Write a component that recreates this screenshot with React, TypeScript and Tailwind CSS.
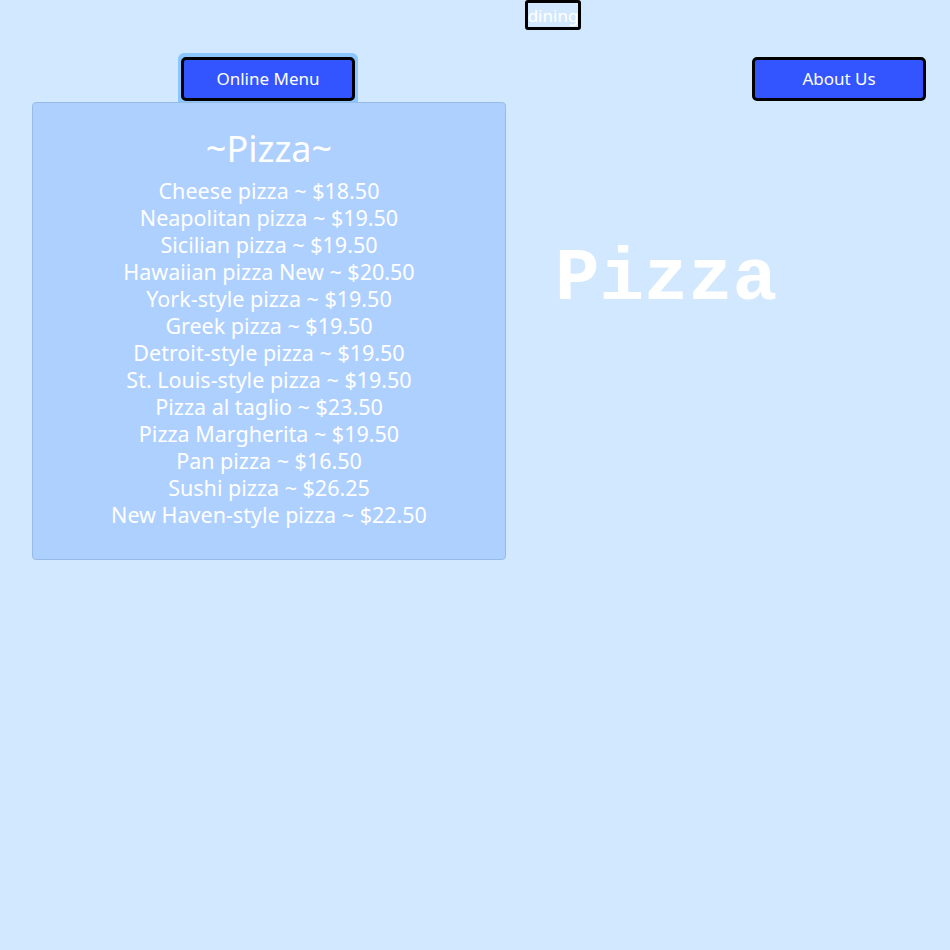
import React from 'react';

const pizzas = [
  'Cheese pizza ~ $18.50',
  'Neapolitan pizza ~ $19.50',
  'Sicilian pizza ~ $19.50',
  'Hawaiian pizza New ~ $20.50',
  'York-style pizza ~ $19.50',
  'Greek pizza ~ $19.50',
  'Detroit-style pizza ~ $19.50',
  'St. Louis-style pizza ~ $19.50',
  'Pizza al taglio ~ $23.50',
  'Pizza Margherita ~ $19.50',
  'Pan pizza ~ $16.50',
  'Sushi pizza ~ $26.25',
  'New Haven-style pizza ~ $22.50',
];

const NavButton = ({ label }: { label: string }) => (
  <button className="w-[174px] h-[44px] bg-[#3355ff] border-[3px] border-black rounded-[5px] text-white text-[17px]">
    {label}
  </button>
);

export default function App() {
  return (
    <div className="min-h-screen bg-[#d2e8ff] font-['Noto_Sans',sans-serif] text-white">
      <div className="pl-[525px]">
        <div className="flex h-[30px] w-[56px] items-center justify-center border-[3px] border-black rounded-[3px] text-[17px] leading-none">
          dining
        </div>
      </div>

      <div className="flex items-end pt-[23px]">
        <div className="ml-[178px] bg-[#8cc6ff] px-[3px] pt-[4px] pb-px rounded-t-[6px]">
          <NavButton label="Online Menu" />
        </div>
        <div className="ml-auto mr-[24px] pb-px">
          <NavButton label="About Us" />
        </div>
      </div>

      <div className="flex">
        <div className="ml-[32px] w-[474px] h-[458px] bg-[#aed0ff] border border-[#98bbe6] rounded-[4px] pt-[22px] text-center">
          <h2 className="text-[36px] leading-[48px] mb-[4px]">~Pizza~</h2>
          {pizzas.map((p) => (
            <p key={p} className="text-[21.5px] leading-[27px]">
              {p}
            </p>
          ))}
        </div>
        <div className="ml-[49px] pt-[140px]">
          <h1 className="font-['Liberation_Mono',monospace] font-bold text-[74px] leading-none">Pizza</h1>
        </div>
      </div>
    </div>
  );
}
